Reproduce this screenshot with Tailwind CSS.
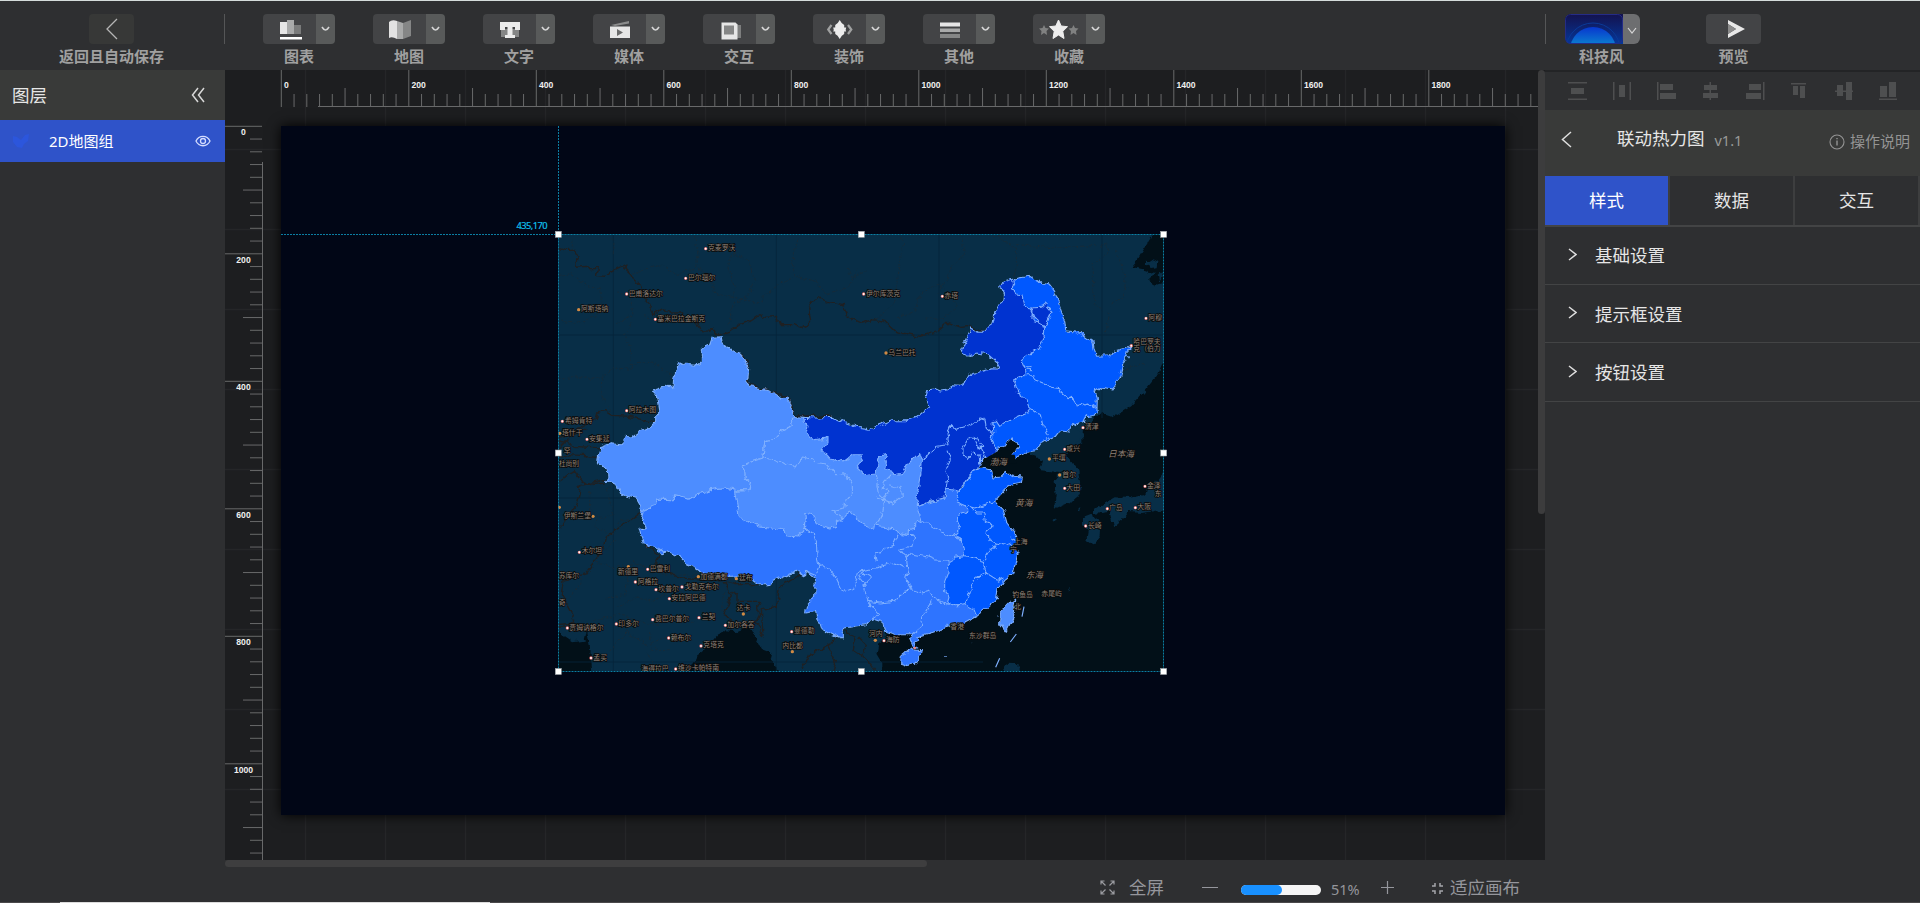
<!DOCTYPE html>
<html lang="zh-CN">
<head>
<meta charset="utf-8">
<title>2D地图组</title>
<script src="https://cdn.jsdelivr.net/npm/@tailwindcss/browser@4"></script>
</head>
<body class="w-[1920px] h-[903px] overflow-hidden bg-[#2e2f31] text-[#e6e6e6] font-['Noto_Sans','Noto_Sans_CJK_SC',sans-serif] flex flex-col">

<header class="h-[70px] shrink-0 border-t border-[#d5dcdb] flex text-[15px] font-bold text-[#a0a0a0]">
  <div class="w-[225px] pt-[13px] h-[70px] flex flex-col items-center relative pr-[2px]">
    <div class="w-[45px] h-[30px] rounded bg-[#373837] flex items-center justify-center">
      <svg width="12" height="22" fill="none" stroke="#b5b5b5" stroke-width="1.3"><path d="M11 1 1 11l10 10"/></svg>
    </div>
    <span class="leading-[24px] whitespace-nowrap">返回且自动保存</span>
    <i class="absolute right-0 top-[13px] w-px h-[30px] bg-[#555657]"></i>
  </div>
  <div id="tools" class="flex pl-[38px] gap-[38px] pt-[13px]"></div>
  <div class="ml-auto w-[375px] pt-[13px] flex">
    <i class="w-px h-[30px] bg-[#555657]"></i>
    <div class="ml-[19px] w-[75px] flex flex-col items-center">
      <div class="w-[75px] h-[30px] rounded-md overflow-hidden flex">
        <svg width="58" height="30" viewBox="0 0 58 30">
          <defs><linearGradient id="sky" x1="0" y1="0" x2="0" y2="1"><stop offset="0" stop-color="#14124e"/><stop offset="1" stop-color="#05379a"/></linearGradient>
          <linearGradient id="sun" x1="0" y1="0" x2="0" y2="1"><stop offset="0" stop-color="#0836cf"/><stop offset=".4" stop-color="#0b82cf"/></linearGradient></defs>
          <rect width="58" height="30" fill="url(#sky)"/>
          <circle cx="28" cy="36" r="27" fill="none" stroke="#0b3a97" stroke-width="1"/>
          <circle cx="28" cy="36" r="23" fill="url(#sun)"/>
          <rect x=".5" y=".5" width="57" height="29" rx="5" fill="none" stroke="#252c86"/>
        </svg>
        <div class="w-[17px] bg-[#6d6e70] flex items-center justify-center"><svg width="10" height="8" class="mt-1" fill="none" stroke="#d8d8d8" stroke-width="1.2"><path d="m1 1 4 5 4-5"/></svg></div>
      </div>
      <span class="leading-[24px] -ml-0.5">科技风</span>
    </div>
    <div class="ml-[66px] w-[55px] flex flex-col items-center">
      <div class="w-[55px] h-[30px] rounded bg-[#434446] flex items-center justify-center pl-1">
        <svg width="18" height="20"><path d="M1 1v4l8 5-8 5v4l17-9z" fill="#e8e8e8"/><path d="M1 5v10l8-5z" fill="#8b8b8b"/></svg>
      </div>
      <span class="leading-[24px]">预览</span>
    </div>
  </div>
</header>

<div class="flex h-[832px] shrink-0">
  <aside class="w-[225px] shrink-0 h-full flex flex-col">
    <div class="h-[50px] bg-[#393a39] pl-[12px] pr-[20px] flex items-center justify-between text-[17.5px]">
      <span>图层</span>
      <svg width="14" height="16" fill="none" stroke="#d8d8d8" stroke-width="1.5"><path d="M7 1 1.500 8 7 15M13 1 7.500 8l5.500 7"/></svg>
    </div>
    <div class="h-[42px] bg-[#2f53c9] flex items-center pl-[12px] pr-[14px] text-[15px] text-white">
      <svg width="18" height="16" class="mr-[19px]"><path d="M1 3l4 1 4 3 4-5 4-1-1 7-4 3-2 4-5-1-4-5z" fill="#2c56dc"/></svg>
      <span class="leading-none">2D地图组</span>
      <svg class="ml-auto" width="16" height="12" fill="none" stroke="#d4ddff" stroke-width="1.3"><path d="M1 6C4-.3 12-.3 15 6c-3 6.300-11 6.300-14 0z"/><circle cx="8" cy="6" r="2.500"/></svg>
    </div>
  </aside>

  <div class="w-[1320px] shrink-0 flex flex-col">
    <main class="relative h-[797px] bg-[#1d1e20] overflow-hidden">
      <svg id="stage" class="block" width="1320" height="797" viewBox="225 70 1320 797">
        <g id="grid" stroke="#252628" stroke-width="1.400"></g>
      </svg>
      <div class="absolute left-[56px] top-[56px] w-[1224px] h-[688.500px] bg-[#010616] shadow-[0_0_12px_#000]"></div>
      <svg class="absolute left-[333px] top-[164px]" width="606" height="437" viewBox="25 28 1818 1311" font-family="'Noto Sans','Noto Sans CJK SC',sans-serif">
        <defs>
          <filter id="rough" filterUnits="userSpaceOnUse" x="0" y="0" width="1870" height="1370" color-interpolation-filters="sRGB">
            <feTurbulence type="fractalNoise" baseFrequency=".045" numOctaves="3" seed="4" result="n"/>
            <feDisplacementMap in="SourceGraphic" in2="n" scale="20" xChannelSelector="R" yChannelSelector="G"/>
          </filter>
        </defs>
        <rect x="25" y="28" width="1818" height="1311" fill="#082e47"/>
        <g filter="url(#rough)">
        <!-- seas -->
        <g fill="#021018">
          <path d="M1815 20H1870V165L1830 175 1810 183 1802 165 1815 140 1795 145 1790 135 1745 127 1765 103z"/>
          <path d="M1870 360 1843 400 1820 455 1780 505 1745 545 1690 578 1660 568 1655 560 1642 572 1620 600 1600 610 1598 650 1540 685 1500 690 1330 600 1280 700 1200 900 1200 1100 1100 1200 1005 1220 1010 1240 985 1260 980 1290 995 1315 995 1370H1870z"/>
          <path d="M405 1370 440 1295 470 1270 500 1235 520 1220 560 1222 600 1205 620 1240 640 1275 665 1285 660 1305 675 1310 692 1370zM0 1215 25 1220 70 1250 105 1245 112 1215 122 1275 130 1370H0z"/>
        </g>
        <!-- peninsulas and islands -->
        <g fill="#082e47">
          <path d="M1580 600 1598 640 1548 672 1552 690 1570 715 1588 735 1597 790 1585 815 1560 835 1512 855 1518 815 1515 765 1530 745 1470 740 1480 705 1440 690 1445 670 1500 640z" transform="translate(0 0)"/>
          <path d="M1870 700 1843 738 1820 770 1790 785 1785 810 1740 820 1695 818 1660 838 1630 855 1630 868 1680 862 1690 905 1720 880 1735 862 1780 865 1870 850zM1600 880 1625 870 1652 890 1650 935 1630 960 1610 945 1615 915 1600 905zM1508 886l14-5 6 6-14 6zM1584 850l8-6-3 16-6-2zM1558 1095l8-18-14 24zM1360 1370V1339l15-22 32 2v50z"/>
          <path d="M1786 108l14 4 12-8 14 8-2 16-18 2-8-10-12 2zM1824 150l8-8 6 14-10 12z"/>
        </g>
        </g>
        <g stroke="#06253b" stroke-width="2.500"><path d="M191 28V1339M680 28V1339M1168 28V600M1657 28V580M25 331H1843M25 820H300M25 1312H1300"/></g>
        <g filter="url(#rough)">
        <!-- admin lines -->
        <g fill="none" stroke="#1b2a35" stroke-width="2.200" stroke-dasharray="8 5">
          <path d="M70 45l-5 40M191 85l-2-50M25 155l40-5 30 25 55 20 8 50-20 30-60 20-45-5M200 205l40 5 10 60-50 30M240 155l40-20 50-15 50 30 60-20 5-40-10-60M445 130l45 30 0 40 60 20 5-30-20-60 15-60-10-50M550 85l45 20 20 60-20 50-40 20-20 65M280 270l60 20 60-20 50 25M25 460h130l40-30 50 5 0-50-20-60 20-30M160 460l-5 60 35 45M250 415l50-5 60 35 10 20M545 215l80 20 55-50M680 180l60-25 60 15M745 45l-20 60 10 45M800 170l30 40 60-20 40-60M890 130l20 30 40-20M1060 40l-10 90-20 110-60 50M1235 30l10 60-40 40-20 40-20 30M1045 280l50-20 20-60 60-20 50 60-40 40-60 0M1330 30l70 40 0 60-10 40M1400 60l120 10 150-10 10 20-50 40 5 120 40 30-5 60M1700 80l30 80-10 60-40 20M1650 395l60 40 80-20"/>
          <path d="M120 800l0 60 40 20 30-10-20-80 60-20M140 870l0 40 50 20 20-40 60-20M195 950l-60 60 50 20 60-10-20 90-60 10M100 1060l-40 60M250 1010l60 30 50 10 90 0M200 1150l60-30 50 10 50-30 70 10 80-30M130 1190l80-20 90 30 50-10 80 0M300 1225l0 50 60 0M180 1280l50-60 60 40 80-30 60 20M320 1339l-30-60M500 1040l40 20-20 60 0 40M330 780l-120 0"/>
        </g>
        <!-- national borders -->
        <g fill="none" stroke="#1f2022" stroke-width="4" stroke-linejoin="round">
          <path d="M15 68 48 77 73 77 82 98 78 125 110 122 122 132 146 132 140 152 165 155 185 140 229 118 222 130 262 168 290 225 310 270 325 260 340 252 365 265 395 265 440 290 452 318 480 320 490 310 505 332 540 320 570 300 605 288 630 270 650 278 680 275 690 300 735 300 765 311 783 290 777 250 790 230 810 221 835 230 880 240 895 275 935 295 970 285 1005 290 1035 320 1110 335 1165 320 1195 293 1235 308 1260 305 1300 320 1332 300"/>
          <path d="M737 574H850M545 380 580 392 597 430 592 480 660 495 712 520 737 574"/>
          <path d="M25 640 60 630 140 580 145 562 165 558 190 572 240 575 295 590 318 590M25 680l40-50 45-20M25 650l50 15 75 5M25 700l30-10 90 5M25 770l50-30 30 40 70-15M95 780l-15 60-50 70M85 785l80-10M280 857l-110 80-10 40-50 70-70 20-5 40 40 80-15 20H25M25 1200l50-5"/>
          <path d="M290 960 330 990 318 1015 350 1040 390 1060 440 1065 520 1070 560 1080 640 1080 M525 1070l20 40-20 50 20 40M545 1100l20 10 0 20 65 0-10 20 10 20-10 20 20 50M640 1235l-5-80 45-10 10-60 40-25 25-15M760 1330l20-40 60-30 40-45 40 20-10 40 30 20M830 1260l30 50-10 29M930 1240l20 20-10 30 40 50"/>
        </g>
        <!-- provinces -->
        <g stroke="#7fb0ff" stroke-width="3.200" stroke-linejoin="round">
          <path fill="#2e74ff" d="M768 865 900 850 1100 847 1182 820 1188 793 1240 790 1300 900 1300 1100 1278 1175 1250 1190 1205 1205 1150 1223 1100 1237 1107 1247 1095 1252 1104 1268 1090 1265 1080 1240 1088 1230 1040 1230 1005 1220 1000 1195 970 1185 945 1200 885 1210 875 1215 875 1240 850 1230 820 1215 812 1190 805 1185 800 1160 768 1165 770 1145 795 1115 797 1060 768 1037z"/>
          <path fill="#2e74ff" d="M280 857 302 850 320 823 370 825 380 813 418 823 440 810 468 805 480 795 520 789 560 797 650 850 768 910 790 925 800 950 802 995 808 1025 800 1050 768 1037 765 1053 740 1040 690 1060 655 1080 625 1080 600 1060 560 1053 520 1057 480 1057 440 1030 415 1020 395 1000 360 980 340 987 330 975 310 963 280 957 275 937 268 910 290 913 285 895 275 885z"/>
          <path fill="#4d8dff" d="M488 338 515 336 518 352 545 380 577 390 590 420 597 432 595 455 588 475 600 486 660 495 695 520 712 522 722 550 737 576 725 585 728 605 705 615 690 622 670 645 645 652 640 700 615 708 578 722 588 738 590 760 603 770 598 798 560 797 520 789 480 795 468 805 440 810 418 823 380 813 370 825 320 823 302 850 280 857 262 825 255 820 210 808 203 785 168 767 178 760 176 737 160 720 143 713 150 670 185 657 215 660 228 635 245 637 265 622 300 608 318 590 318 572 328 560 320 510 308 498 358 482 370 487 372 460 388 412 400 418 440 422 455 412 455 375 465 367 480 360z"/>
          <path fill="#4d8dff" d="M737 576 760 578 1000 680 1118 680 1120 720 1110 790 1100 847 1118 890 1095 895 1095 910 1080 915 1078 933 1045 925 1020 910 980 905 960 910 930 892 905 862 890 868 880 880 860 893 862 905 840 910 800 897 785 870 768 865 770 880 765 920 745 937 710 933 700 915 665 910 625 907 580 885 568 870 562 840 555 800 598 798 603 770 590 760 588 738 578 722 615 708 640 700 645 652 670 645 690 622 728 605 725 585z"/>
          <path fill="none" d="M640 700 680 705 700 718 740 730 755 700 785 705 800 717 830 720 860 750 885 747 905 780 905 805 890 825 885 850 850 857 862 870 880 880M1025 750l-20 20-5 20 15 10-15 25 30 10 25-20-2-25-35-10M980 750l10 60 15 15-5 35-20 45M1000 825l-20-5"/>
          <path fill="#0033d0" d="M760 578 800 580 850 578 890 595 920 605 948 608 955 617 990 600 1025 588 1070 588 1100 577 1138 543 1128 518 1135 495 1155 493 1175 502 1195 498 1210 480 1235 482 1255 465 1265 447 1300 440 1325 432 1348 433 1340 412 1315 390 1280 385 1270 395 1242 388 1235 378 1262 310 1280 320 1300 320 1330 300 1335 265 1348 240 1367 225 1367 200 1350 190 1360 172 1392 163 1500 240 1500 500 1420 600 1325 635 1340 675 1325 705 1300 697 1292 715 1285 730 1255 755 1248 770 1235 780 1230 800 1188 793 1182 820 1145 830 1100 847 1105 795 1115 735 1118 705 1110 687 1095 695 1075 715 1060 745 1035 750 1025 740 1005 735 1010 710 1005 690 990 695 985 715 980 745 940 750 920 730 940 705 935 690 910 690 880 712 865 705 840 700 818 675 835 655 835 640 790 645 770 625 775 605z"/>
          <path fill="#0058ff" d="M1392 163 1440 155 1475 175 1500 180 1515 200 1530 245 1545 290 1548 318 1575 322 1595 328 1627 350 1630 375 1638 395 1675 393 1700 378 1745 366 1728 385 1733 395 1720 415 1710 455 1690 493 1655 487 1636 502 1643 520 1642 560 1635 575 1620 578 1610 570 1600 590 1565 605 1560 622 1528 618 1515 635 1495 643 1470 660 1460 675 1430 680 1410 697 1385 710 1385 690 1405 665 1402 652 1385 643 1370 650 1355 668 1340 673 1325 635 1332 620 1330 590 1340 590 1350 605 1370 590 1400 578 1430 565 1442 550 1430 520 1410 520 1400 490 1395 465 1430 450 1425 430 1415 405 1440 385 1465 370 1483 335 1485 312 1475 308 1470 292 1450 288 1450 272 1440 250 1422 240 1417 210 1400 208 1385 195 1395 178z"/>
          <path fill="#0033d0" d="M1442 250 1475 248 1488 238 1507 260 1490 295 1480 310 1466 285 1455 280z"/>
          <path fill="none" d="M1430 450 1450 450 1455 465 1480 475 1505 488 1530 492 1535 505 1555 525 1570 518 1580 548 1610 535 1642 552M1442 552 1460 565 1475 570 1482 600 1498 640M1428 428l16 0-2 10-14-2M1118 700l27-15 15-20 38-5-6-30 12-28 16 12 50-15 22-20 14 4 4 28 22 20M1195 675l10 28-20 32 10 25-7 33M1240 670l0 22 20 5 12-18 16 14 10-6-10-18 12-6-18-20-22-4-10 18zM1278 650l10 18M1288 690l2 25M1260 695l-8 10"/>
          <path fill="#0058ff" d="M1230 800 1248 770 1270 740 1295 730 1325 735 1330 760 1355 757 1370 743 1390 755 1418 757 1415 772 1390 777 1370 790 1335 830 1362 860 1372 895 1395 925 1403 940 1400 955 1385 963 1405 985 1400 1005 1395 1025 1390 1045 1365 1065 1345 1095 1340 1125 1305 1155 1278 1175 1270 1155 1245 1140 1220 1143 1192 1135 1198 1115 1188 1100 1188 1070 1198 1045 1195 1010 1215 998 1245 993 1235 945 1215 930 1232 912 1222 890 1230 870 1255 860 1250 845 1220 832z"/>
          <path fill="none" d="M1255 845 1275 850 1335 830M1262 847 1280 865 1302 865 1307 890 1330 902 1328 912 1312 925 1315 945 1340 955 1370 962 1385 955M1340 955 1330 975 1315 985 1300 1010 1310 1045 1275 1065 1260 1105 1245 1140M1245 993 1275 1000 1302 1008M1310 1045 1345 1067 1362 1060"/>
          <path fill="none" d="M1120 890 1170 920 1220 940 1235 945M1095 933 1090 965 1048 973 1060 990 1070 998 1080 987 1135 997 1155 1005 1195 1010M1070 998 1075 1035 1068 1060 1088 1095 1120 1105 1140 1100 1155 1125 1192 1135M1145 1130 1120 1175 1115 1205 1085 1230M1088 1095 1065 1100 1035 1130 990 1135 955 1130 940 1085 965 1060 935 1040 975 1030 1010 1020 1035 1012 1065 1030M955 1130 985 1165 970 1185M1045 930 1030 965 975 985 980 1015M808 1025 820 1023 855 1050 880 1103 912 1095 930 1035 945 1033 930 1060 950 1085 940 1085M1055 930 1095 933"/>
          <path fill="#2e74ff" d="M1085 1272 1115 1275 1110 1300 1080 1325 1053 1315 1055 1295z"/>
          <path fill="#4d8dff" d="M1385 1127 1398 1130 1392 1175 1370 1220 1350 1195 1352 1165z"/>
          <path d="M1268 1255l1 3M1190 1205h15M1400 985l10-4M1340 1173l1 2M1190 1294v2M1385 940l12 8M1440 1110l3-5"/>
        </g>
        </g>
        <path d="M1423 1146l-6 30M1400 1228l-18 24M1350 1301l-12 27" stroke="#7fb0ff" stroke-width="3.500"/>
        <path d="M1300 705 1340 682 1365 672 1400 655 1405 665 1385 690 1395 690 1400 715 1370 720 1335 735 1325 715z" fill="#021018"/>
        <circle cx="1095" cy="1270" r="4" fill="#f08080"/>
        <g id="places" font-size="20.500" fill="#8d8178" stroke="#0a0a0a" stroke-width="5" paint-order="stroke" stroke-linejoin="round"></g>
      </svg>
      <svg class="absolute left-0 top-0" width="1320" height="797" viewBox="225 70 1320 797">
        <g id="ticks" stroke="#68696a" stroke-width="1"></g>
        <g id="nums" fill="#f0f0f0" font-family="'Liberation Sans',sans-serif" font-weight="700" font-size="8.600"></g>
        <g fill="none" stroke="#0b7ea3" stroke-width="1" stroke-dasharray="2 1"><path d="M558.500 126V234M281 234.500H558M558.500 234.500H1163.500V671.500H558.500z"/></g>
        <text x="516.500" y="229" fill="#10c0ee" stroke="#10c0ee" stroke-width=".2" font-size="9.300" textLength="31" font-family="'Noto Sans',sans-serif">435,170</text>
        <g id="handles" fill="#fff" stroke="#9aa0a6" stroke-width=".6"></g>
      </svg>
      <div class="absolute right-0 top-0 w-[7px] h-[444px] rounded bg-[#3c3c3d]"></div>
      <div class="absolute left-0 bottom-0 w-[1320px] h-[7px] bg-[#2e2f31]"><div class="w-[702px] h-full rounded bg-[#3e3e3f]"></div></div>
    </main>
    <footer class="h-[35px] flex items-center pl-[875px] pt-[6px] text-[17.500px] text-[#95969c] whitespace-nowrap leading-none">
      <svg width="15" height="15" fill="none" stroke="#9a9ba0" stroke-width="1.200"><path d="M1 4.500V1h3.500M1 1l4.500 4.500M10.500 1h3.500v3.500M14 1 9.500 5.500M1 10.500v3.500h3.500M1 14l4.500-4.500M10.500 14h3.500v-3.500M14 14 9.500 9.500"/></svg>
      <span class="ml-[14px] w-[35px]">全屏</span>
      <i class="ml-[38px] w-[16px] h-px bg-[#95969c]"></i>
      <div class="ml-[23px] mt-[4px] w-[80px] h-[10px] rounded-full bg-[#f5f5f5]"><div class="h-full rounded-full bg-[#1890ff]" style="width:51%"></div></div>
      <span class="ml-[10px] mt-[3px] w-[49px] text-[14.500px]">51%</span>
      <svg width="15" height="15" stroke="#95969c" stroke-width="1.200"><path d="M7.500 1v13M1 7.500h13"/></svg>
      <svg class="ml-[36px] mt-px" width="13" height="13" fill="none" stroke="#a5a6aa" stroke-width="1.500"><path d="M1 4h3V1M9 1v3h3M1 9h3v3M12 9H9v3"/></svg>
      <span class="ml-[6px]">适应画布</span>
    </footer>
  </div>

  <aside class="w-[375px] shrink-0 flex flex-col">
    <div class="h-[40px] border-t-2 border-[#232426]">
      <svg class="block" width="375" height="38" viewBox="1545 72 375 38" fill="#4e4f50">
        <path d="M1568 82h19v1.500h-19zM1571 88h13v6h-13zM1568 98.500h19v1.500h-19z"/>
        <path d="M1613 82h1.500v18h-1.500zM1619 85h6v12h-6zM1629.500 82h1.500v18h-1.500z"/>
        <path d="M1657 82h1.500v18h-1.500zM1660 84h13v6h-13zM1660 93h16v6h-16z"/>
        <path d="M1709.500 82h1.500v18h-1.500zM1704 85h13v5h-13zM1703 93h15v5h-15z"/>
        <path d="M1763 82h1.500v18h-1.500zM1749 84h12v6h-12zM1746 93h15v6h-15z"/>
        <path d="M1791 83h15v1.500h-15zM1793 86h5v9h-5zM1800 86h5v12h-5z"/>
        <path d="M1835 90.500h18v1.500h-18zM1837 85h6v11h-6zM1846 82h6v18h-6z"/>
        <path d="M1879 98.500h18v1.500h-18zM1880 86h7v11h-7zM1889 82h7v15h-7z"/>
      </svg>
    </div>
    <div class="h-[66px] bg-[#393a39] flex items-center pl-[16px] pr-[10px] pb-[9px] leading-none">
      <svg class="mt-[2px]" width="11" height="17" fill="none" stroke="#dedede" stroke-width="1.500"><path d="M10 1 1.500 8.500 10 16"/></svg>
      <span class="ml-[45px] text-[17.500px]">联动热力图</span>
      <span class="ml-[10px] mt-[4px] text-[14.500px] text-[#9a9a9a]">v1.1</span>
      <svg class="ml-auto mt-[6px]" width="16" height="16" fill="none" stroke="#949494" stroke-width="1.100"><circle cx="8" cy="8" r="7"/><path d="M8 6.500v5M8 4v1.200" stroke-width="1.400"/></svg>
      <span class="ml-[5px] mt-[6px] text-[15px] text-[#949494]">操作说明</span>
    </div>
    <div class="h-[51px] border-b-2 border-[#434445] bg-[#3d3e3f] flex gap-[2px] text-[17.500px]">
      <div class="w-[123px] bg-[#2f53c9] flex items-center justify-center text-white">样式</div>
      <div class="w-[123px] bg-[#2e2f31] flex items-center justify-center">数据</div>
      <div class="w-[123px] bg-[#2e2f31] flex items-center justify-center">交互</div>
    </div>
    <div class="flex flex-col text-[17.500px]">
      <div class="h-[58px] border-b border-[#434445] flex items-center gap-[18px] pl-[23px]"><svg class="-mt-[3px]" width="9" height="13" fill="none" stroke="#dedede" stroke-width="1.500"><path d="m1 1 7 5.500L1 12"/></svg><span>基础设置</span></div>
      <div class="h-[58px] border-b border-[#434445] flex items-center gap-[18px] pl-[23px] pt-[1px]"><svg class="-mt-[3px]" width="9" height="13" fill="none" stroke="#dedede" stroke-width="1.500"><path d="m1 1 7 5.500L1 12"/></svg><span>提示框设置</span></div>
      <div class="h-[59px] border-b border-[#434445] flex items-center gap-[18px] pl-[23px] pt-[1px]"><svg class="-mt-[3px]" width="9" height="13" fill="none" stroke="#dedede" stroke-width="1.500"><path d="m1 1 7 5.500L1 12"/></svg><span>按钮设置</span></div>
    </div>
  </aside>
</div>
<div class="h-px shrink-0 bg-[#4a494b] pl-[60px]"><div class="w-[430px] h-px bg-[#dcdcdc]"></div></div>

<script>
const tools = [
  ['图表','<path d="M3 5h7v12H3z" fill="#e6e6e6"/><path d="M10 3h7v14h-7z" fill="#a9aaaa"/><path d="M17 8h7v9h-7z" fill="#7a7b7b"/><path d="M3 20h22v2.500H3z" fill="#fff"/>'],
  ['地图','<path d="M2 5q3-3 8-1v18q-5-3-8-1z" fill="#e2e2e2"/><path d="m10 4 6 2v16l-6 0z" fill="#a9aaaa"/><path d="m16 6 8-3v16l-8 3z" fill="#858686"/>'],
  ['文字','<path d="M4 12h18v8H4z" fill="#858686"/><path d="M3 5h20v8h-5v-3h-2.500v8H18v3H8v-3h2.500v-8H8v3H3z" fill="#ececec"/>'],
  ['媒体','<path d="m4 8 18-4v2.500l-14 2.500z" fill="#8b8c8c"/><path d="M3 9.500h20v11.500H3z" fill="#e6e6e6"/><path d="m10 12 6 3.500-6 3.500z" fill="#6a6b6b"/>'],
  ['交互','<path d="M17 8h7v13h-7z" fill="#7d7e7e"/><path d="M4.500 5.500h14l2 2v15h-16z" fill="#e6e6e6"/><path d="M7 8.500h10v9H7z" fill="#858686"/>'],
  ['装饰','<path d="M12.700 3q2 4 4.500 5v2.500h2q-1 2.500 0 4h-2V17q-2.500 1-4.500 5-2-4-4.500-5v-2.500h-2q1-1.500 0-4h2V8q2.500-1 4.500-5z" fill="#ececec"/><path d="M4.500 8 1.200 12.500 4.500 17M21 8l3.300 4.500L21 17" fill="none" stroke="#a0a1a1" stroke-width="2.200"/>'],
  ['其他','<path d="M3 5.500h20v4H3z" fill="#e6e6e6"/><path d="M3 11.500h20v3.500H3z" fill="#a9aaaa"/><path d="M3 17h20v4H3z" fill="#858686"/>'],
  ['收藏','<path d="m11.500 3 2.700 6 6.300.700-4.700 4.600 1.200 7.200-5.500-3.500-5.500 3.500 1.200-7.200L2.500 9.700 8.800 9z" fill="#ececec" stroke="#ececec"/><path d="m-3 8 1.500 3 3.500.500-2.500 2.500.5 4-3-2-3 2 .500-4L-8 11.500l3.500-.500zM26.500 8l1.500 3 3.500.500L29 14l.500 4-3-2-3 2 .500-4-2.500-2.500L25 11z" fill="#808181"/>']
];
document.getElementById('tools').innerHTML = tools.map(([n, p]) => `
  <div class="w-[72px] flex flex-col items-center">
    <div class="w-[72px] h-[30px] rounded overflow-hidden flex">
      <div class="w-[53px] bg-[#434446] flex items-center justify-center pl-[2px]"><svg class="overflow-visible" width="28" height="25">${p}</svg></div>
      <div class="w-[19px] bg-[#585a5a] flex items-center justify-center"><svg width="9" height="6" fill="none" stroke="#d4d4d4" stroke-width="1.600"><path d="M1 1q3.500 6 7 0"/></svg></div>
    </div>
    <span class="leading-[24px]">${n}</span>
  </div>`).join('');

let g = '';
for (let x = 305.5; x < 1540; x += 80) g += `<path d="M${x} 70V867"/>`;
for (let y = 149.5; y < 860; y += 80) g += `<path d="M225 ${y}H1545"/>`;
document.getElementById('grid').innerHTML = g;

// Rulers: one tick per 20 canvas units
const step = 12.75;
let t = '<path d="M318 106.500H1538M262.500 162V860"/>', n = '';
for (let i = 0; i < 99; i++) {
  const x = 281.3 + i * step;
  t += `<path d="M${x} ${i % 10 ? (i % 5 ? 94 : 88) : 70}V107"/>`;
  if (i % 10 === 0) n += `<text x="${x + 2.700}" y="88">${i * 20}</text>`;
}
for (let i = 0; i < 58; i++) {
  const y = 126.3 + i * step;
  t += `<path d="M${i % 10 ? (i % 5 ? 250 : 243) : 225} ${y}H262"/>`;
  if (i % 10 === 0) n += `<text x="243.500" y="${y + 8.700}" text-anchor="middle">${i * 20}</text>`;
}
document.getElementById('ticks').innerHTML = t;
document.getElementById('nums').innerHTML = n;

let h = '';
for (const x of [558.3, 861.3, 1163.7]) for (const y of [234.3, 453, 671.5])
  if (!(x === 861.3 && y === 453)) h += `<rect x="${x - 3}" y="${y - 3}" width="6" height="6"/>`;
document.getElementById('handles').innerHTML = h;

// [label, text x, baseline y, dot x, dot y, capital]
const places = [
 ['克麦罗沃',475,77,468,72],['巴尔瑙尔',415,167,408,161],['巴甫洛达尔',237,213,231,208],['阿斯塔纳',94,260,87,255,1],
 ['塞米巴拉金斯克',323,290,317,284],['阿拉木图',237,562,231,558],['希姆肯特',46,594,38,590],['塔什干',37,631,30,626,1],
 ['安集延',118,650,112,644],['杜尚别',27,725],['罕',42,686],['伊尔库茨克',949,213,942,208],['赤塔',1184,220,1178,215],['乌兰巴托',1016,390,1009,385,1],
 ['阿穆',1796,286,1789,281],['哈巴罗夫',1751,359,1745,363],['克（伯力',1751,379],['清津',1606,614,1600,609],['咸兴',1550,679,1545,674],
 ['平壤',1507,707,1499,703,1],['首尔',1538,756,1530,751,1],['大田',1550,797,1545,791],['金泽',1792,790,1786,785],['东',1815,815],['大阪',1763,854,1757,849],['广岛',1678,857,1673,852],['长崎',1615,909,1608,904],
 ['上海',1393,957],['宁',1381,982],['钓鱼岛',1388,1117],['赤尾屿',1475,1114],['北',1394,1152],['香港',1202,1213],['东沙群岛',1258,1241],['河内',958,1235,977,1247,1],['海防',1009,1253,1003,1248],
 ['伊斯兰堡',42,880,130,875,1],['木尔坦',96,986,89,983],['苏库尔',27,1060],['奇',27,1140],['新德里',204,1047,236,1026,1],['巴雷利',300,1039,294,1034],['阿格拉',264,1077,257,1072],
 ['坎普尔',326,1100,319,1095],['戈勒克布尔',405,1092,397,1087],['安拉阿巴德',365,1127,359,1122],['加德满都',452,1062,446,1056,1],['廷布',568,1066,560,1062,1],['达卡',561,1157,581,1168,1],
 ['兰契',456,1184,448,1179],['费巴尔普尔',316,1189,309,1185],['印多尔',206,1203,200,1198],['贾姆讷格尔',59,1215,53,1210],['赖布尔',363,1245,357,1240],['克塔克',461,1268,454,1264],['加尔各答',533,1207,527,1202],
 ['孟买',131,1305,124,1300],['维沙卡帕特南',385,1336,378,1333],['海得拉巴',275,1340],['曼德勒',733,1226,726,1221],['内比都',698,1270,728,1281,1],['',0,0,29,848,1]
];
let s = '';
for (const [l, x, y, a, b, c] of places) {
  if (a) s += c ? `<circle cx="${a}" cy="${b}" r="5" fill="#d08a45" stroke="none"/>` : `<circle cx="${a}" cy="${b}" r="3" fill="#fff" stroke="#e86a6a" stroke-width="4"/>`;
  if (l) s += `<text x="${x}" y="${y}">${l}</text>`;
}
for (const [l, x, y] of [['渤海',1320,721],['黄海',1396,843],['东海',1428,1061],['日本海',1675,697]])
  s += `<text x="${x}" y="${y}" font-size="26" font-style="italic">${l}</text>`;
document.getElementById('places').innerHTML = s;
</script>
</body>
</html>
